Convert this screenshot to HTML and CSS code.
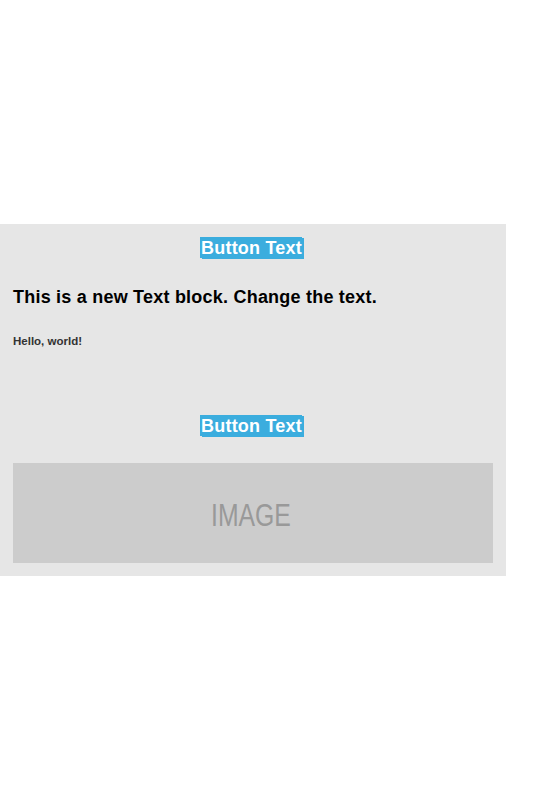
FILE: index.html
```html
<!DOCTYPE html>
<html>
<head>
<meta charset="utf-8">
<link rel="stylesheet" href="styles.css">
</head>
<body>
<div class="panel">
  <div class="btn-row"><span class="btn">Button Text</span></div>
  <h1 class="title">This is a new Text block. Change the text.</h1>
  <p class="hello">Hello, world!</p>
  <div class="btn-row btn-row-2"><span class="btn">Button Text</span></div>
  <div class="image"><span class="image-label">IMAGE</span></div>
</div>
</body>
</html>
```
FILE: styles.css
```css
html, body {
  margin: 0;
  padding: 0;
  background: #ffffff;
  font-family: "Liberation Sans", Arial, sans-serif;
}
.panel {
  margin-top: 224px;
  width: 506px;
  box-sizing: border-box;
  padding: 13px 17px 13px 13px;
  background: #e6e6e6;
}
.btn-row {
  text-align: center;
  height: 21px;
}
.btn {
  display: inline-block;
  background: #3badde;
  color: #ffffff;
  font-weight: bold;
  font-size: 18px;
  line-height: 20px;
  padding: 1px 0 0 1px;
  letter-spacing: 0.2px;
  box-shadow: 2px 1px 0 #3badde;
}
.title {
  margin: 29px 0 0;
  font-size: 18px;
  line-height: 20px;
  font-weight: bold;
  letter-spacing: 0.22px;
  color: #000000;
}
.hello {
  margin: 27px 0 0;
  font-size: 11.5px;
  line-height: 14px;
  font-weight: bold;
  color: #333333;
}
.btn-row-2 {
  margin-top: 67px;
}
.image {
  margin-top: 27px;
  width: 480px;
  height: 100px;
  background: #cccccc;
  display: flex;
  align-items: center;
  justify-content: center;
}
.image-label {
  display: inline-block;
  font-size: 31px;
  color: #999999;
  transform: scaleX(0.8);
  margin: 6px 5px 0 0;
}
```
